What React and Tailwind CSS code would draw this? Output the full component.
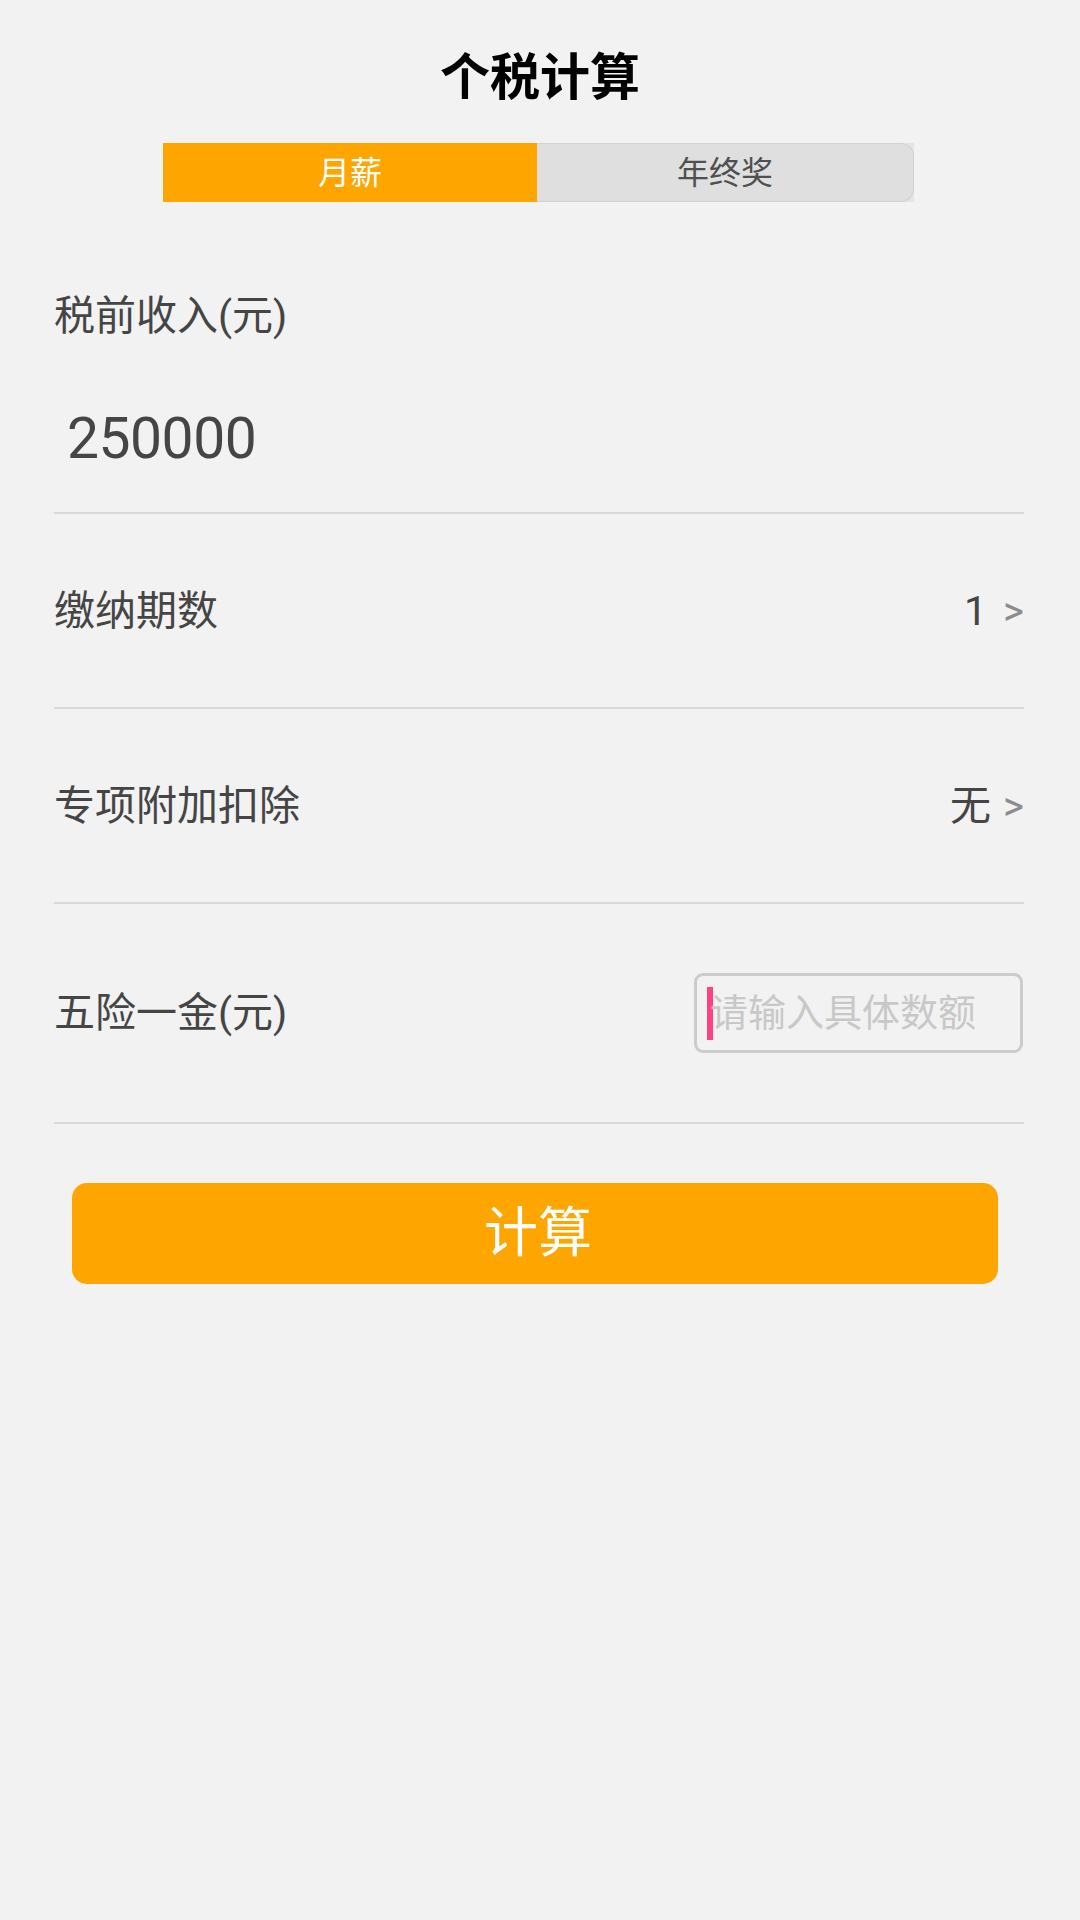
export default function App() {
  const font = { fontFamily: 'Roboto, "Noto Sans CJK SC", "Noto Sans", sans-serif' };
  return (
    <div className="w-[1080px] min-h-[1920px] bg-[#f2f2f2] flex flex-col" style={font}>
      <div className="pt-[48px] text-center text-[50px] leading-[60px] font-bold text-black">个税计算</div>

      <div className="mt-[35px] ml-[163px] w-[751px] h-[59px] flex">
        <div className="w-[374px] h-full bg-[#ffa500] flex items-center justify-center text-white text-[32px] leading-none">月薪</div>
        <div className="flex-1 h-full bg-[#e4e4e4]">
          <div className="w-full h-full bg-[#dfdfdf] border border-[#d2d2d2] border-l-0 rounded-r-[13px] flex items-center justify-center text-[#505050] text-[32px] leading-none">年终奖</div>
        </div>
      </div>

      <div className="ml-[54px] w-[970px] flex flex-col">
        <div className="mt-[90px] text-[41px] leading-[48px] text-[#454545]">税前收入(元)</div>
        <div className="mt-[66px] pl-[13px] text-[57px] leading-[66px] text-[#454545] tracking-[-0.5px]">250000</div>
        <div className="mt-[40px] h-[2px] bg-[#d9d9d9]" />

        <div className="h-[193px] flex items-center justify-between">
          <span className="text-[41px] leading-[48px] text-[#454545]">缴纳期数</span>
          <span className="flex items-center">
            <span className="text-[41px] leading-[48px] text-[#454545]">1</span>
            <span className="ml-[16px] text-[40px] leading-[48px] text-[#8c8c8c] translate-y-[1px]">&gt;</span>
          </span>
        </div>
        <div className="h-[2px] bg-[#d9d9d9]" />

        <div className="h-[193px] flex items-center justify-between">
          <span className="text-[41px] leading-[48px] text-[#454545]">专项附加扣除</span>
          <span className="flex items-center">
            <span className="text-[41px] leading-[48px] text-[#454545]">无</span>
            <span className="ml-[12px] text-[40px] leading-[48px] text-[#8c8c8c] translate-y-[1px]">&gt;</span>
          </span>
        </div>
        <div className="h-[2px] bg-[#d9d9d9]" />

        <div className="h-[218px] flex items-center justify-between">
          <span className="text-[41px] leading-[48px] text-[#454545]">五险一金(元)</span>
          <div className="w-[329px] h-[80px] mr-[1px] border-[3px] border-[#cccccc] rounded-[9px] flex items-center pl-[10px]">
            <span className="w-[6px] h-[53px] bg-[#ff4081] shrink-0" />
            <span className="-ml-[3px] text-[38px] leading-[48px] text-[#c8c8c8]">请输入具体数额</span>
          </div>
        </div>
        <div className="h-[2px] bg-[#d9d9d9]" />
      </div>

      <button className="mt-[59px] ml-[72px] w-[926px] h-[101px] rounded-[15px] bg-[#ffa500] text-white text-[54px] leading-none flex items-center justify-center pl-[6px]">计算</button>
    </div>
  );
}
